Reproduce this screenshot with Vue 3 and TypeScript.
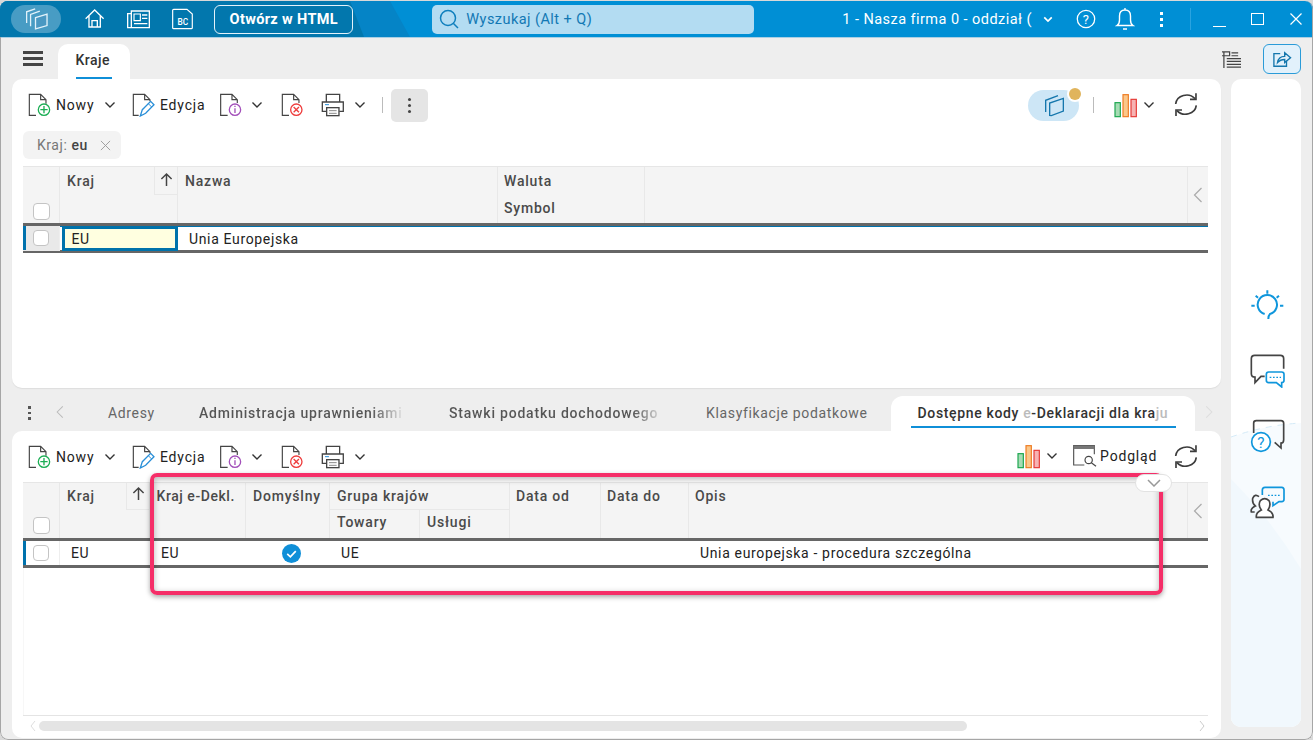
<script setup lang="ts">
const tabs2: string[] = ['Adresy', 'Administracja uprawnieniami', 'Stawki podatku dochodowego', 'Klasyfikacje podatkowe']
</script>

<template>
  <div class="window">
    <svg class="defs" aria-hidden="true">
      <symbol id="i-new" viewBox="84 278 70 72">
        <path d="M108 345H88V282H122L138 298V310M122 282V298H138" fill="none" stroke="#444" stroke-width="3.5" />
        <circle cx="132" cy="328" r="17" fill="#fff" stroke="#1cae55" stroke-width="4" />
        <path d="M132 317V339M121 328H143" stroke="#1cae55" stroke-width="4" />
      </symbol>
      <symbol id="i-edit" viewBox="396 278 70 72">
        <path d="M416 345H400V282H434L450 298V303M434 282V298H450M400 345H412" fill="none" stroke="#444" stroke-width="3.5" />
        <path d="M421 347L427 328L452 303L462 313L437 339Z" fill="#fff" stroke="#2a8fd8" stroke-width="4" />
        <path d="M445 310L455 320" stroke="#2a8fd8" stroke-width="3" />
      </symbol>
      <symbol id="i-info" viewBox="656 278 70 72">
        <path d="M682 345H661V282H695L711 298V308M695 282V298H711" fill="none" stroke="#444" stroke-width="3.5" />
        <circle cx="704" cy="328" r="17" fill="#fff" stroke="#a350ba" stroke-width="4" />
        <path d="M704 324V338M704 316V320" stroke="#a350ba" stroke-width="4" />
      </symbol>
      <symbol id="i-del" viewBox="844 278 70 72">
        <path d="M868 345H848V282H882L898 298V308M882 282V298H898" fill="none" stroke="#444" stroke-width="3.5" />
        <circle cx="890" cy="328" r="17" fill="#fff" stroke="#ee3d3d" stroke-width="4" />
        <path d="M882 320L898 336M898 320L882 336" stroke="#ee3d3d" stroke-width="4" />
      </symbol>
      <symbol id="i-print" viewBox="964 278 70 72">
        <path d="M980 305V282H1020V305M980 333H968V305H1031V333H1019" fill="none" stroke="#444" stroke-width="4" />
        <rect x="981" y="322" width="37" height="24" fill="#fff" stroke="#444" stroke-width="4" />
        <path d="M988 331H1011M988 339H1011" stroke="#888" stroke-width="3" />
        <path d="M976 313H988" stroke="#2a8fd8" stroke-width="3" />
      </symbol>
      <symbol id="i-chev" viewBox="0 0 12 8">
        <path d="M1.5 1.5L6 6L10.5 1.5" fill="none" stroke="#333" stroke-width="1.4" />
      </symbol>
      <symbol id="i-chart" viewBox="760 276 75 75">
        <rect x="766" y="305" width="16" height="42" fill="#a6dcb4" stroke="#1aa64e" stroke-width="3.500" />
        <rect x="790" y="281" width="16" height="66" fill="#fbc78a" stroke="#ee7b22" stroke-width="3.500" />
        <rect x="814" y="295" width="16" height="52" fill="#f6b3b3" stroke="#e53935" stroke-width="3.500" />
      </symbol>
      <symbol id="i-refresh" viewBox="940 276 76 76">
        <path d="M948 312A33 30 0 0 1 1006 296M1010 316A33 30 0 0 1 952 332" fill="none" stroke="#3c3c3c" stroke-width="5" />
        <path d="M1009 280V298H991M949 348V330H967" fill="none" stroke="#3c3c3c" stroke-width="5" />
      </symbol>
      <symbol id="i-up" viewBox="0 0 14 16">
        <path d="M7 15V2M1.500 7.500L7 2L12.500 7.500" fill="none" stroke="#444" stroke-width="1.600" />
      </symbol>
    </svg>

    <header class="topbar">
      <span class="topbar-dark"></span>
      <span class="topbar-band"></span>
      <span class="logo-pill">
        <svg class="ic-logo" viewBox="70 22 76 72">
          <path d="M78 70V36L104 27M90 80V44L118 34" fill="none" stroke="#e2f2fa" stroke-width="4" />
          <path d="M105 54L140 43V78L105 88Z" fill="#4a98c2" stroke="#e2f2fa" stroke-width="4" />
        </svg>
      </span>
      <svg class="ic-home" viewBox="250 28 70 64">
        <path d="M258 60L285 34L312 60M268 52V85H302V52M277 85V66H293V85" fill="none" stroke="#fff" stroke-width="4" />
      </svg>
      <svg class="ic-news" viewBox="382 30 74 62">
        <path d="M398 36H452V86H398ZM398 44H387V86H398" fill="none" stroke="#fff" stroke-width="4" />
        <path d="M406 45H425V65H406Z" fill="none" stroke="#fff" stroke-width="3.5" />
        <path d="M430 48H446M430 58H446M406 74H446" stroke="#fff" stroke-width="4" />
      </svg>
      <svg class="ic-bc" viewBox="522 26 70 66">
        <path d="M527 33Q527 30 530 30H570L586 44V85Q586 88 583 88H530Q527 88 527 85Z" fill="none" stroke="#fff" stroke-width="3.5" />
        <text x="558" y="77" text-anchor="middle" fill="#fff" font-family="Roboto, sans-serif" font-size="25" font-weight="500">BC</text>
      </svg>
      <button class="html-btn">Otwórz w HTML</button>
      <div class="search">
        <svg class="ic-search" viewBox="0 0 20 20">
          <circle cx="9" cy="9" r="7.5" fill="none" stroke="#0f7fbd" stroke-width="1.5" />
          <path d="M14.5 14.5L19 19" stroke="#0f7fbd" stroke-width="1.5" />
        </svg>
        <span>Wyszukaj (Alt + Q)</span>
      </div>
      <span class="company">1 - Nasza firma 0 - oddział (</span>
      <svg class="ic-co" viewBox="0 0 12 8"><path d="M1.5 1.5L6 6L10.5 1.5" fill="none" stroke="#fff" stroke-width="2" /></svg>
      <svg class="ic-help" viewBox="0 0 20 20">
        <circle cx="10" cy="10" r="8.7" fill="none" stroke="#fff" stroke-width="1.3" />
        <text x="10" y="14.5" text-anchor="middle" fill="#fff" font-family="Roboto, sans-serif" font-size="13">?</text>
      </svg>
      <svg class="ic-bell" viewBox="0 0 20 24">
        <path d="M2 18.5Q4.5 17 4.5 13V9Q4.5 3 10 3T15.500 9V13Q15.500 17 18 18.500ZM10 1V3M8 22H12" fill="none" stroke="#fff" stroke-width="1.400" />
      </svg>
      <span class="dots-top"><i></i><i></i><i></i></span>
      <span class="top-sep"></span>
      <span class="win-min"></span>
      <span class="win-max"></span>
      <svg class="win-close" viewBox="0 0 12 12"><path d="M.5 .5L11.500 11.500M11.500 .5L.5 11.500" stroke="#fff" stroke-width="1.200" /></svg>
    </header>

    <nav class="main-tabs">
      <span class="burger"><i></i><i></i><i></i></span>
      <div class="main-tab"><span>Kraje</span></div>
      <svg class="ic-list" viewBox="0 0 22 20">
        <path d="M1 1H3V18M1 1H9V5H1M11 2H18M11 5H18M6 8H21M6 11H21M6 14H21M6 17H21" fill="none" stroke="#444" stroke-width="1.300" />
      </svg>
      <button class="share-btn">
        <svg viewBox="0 0 22 20">
          <path d="M9 4H2V18H16V12" fill="none" stroke="#1577ad" stroke-width="1.500" />
          <path d="M6 14Q7 7 14 7V3L20.500 8.500L14 14V10.500Q9 10.500 6 14Z" fill="none" stroke="#1577ad" stroke-width="1.500" />
        </svg>
      </button>
    </nav>

    <div class="workspace">
      <div class="left">
        <section class="card card-top">
          <div class="toolbar">
            <svg class="ic-doc"><use href="#i-new" /></svg>
            <span class="lbl lbl-new">Nowy</span>
            <svg class="ic-chev"><use href="#i-chev" /></svg>
            <svg class="ic-doc m-edit"><use href="#i-edit" /></svg>
            <span class="lbl lbl-edit">Edycja</span>
            <svg class="ic-doc m-info"><use href="#i-info" /></svg>
            <svg class="ic-chev m-chev"><use href="#i-chev" /></svg>
            <svg class="ic-doc m-del"><use href="#i-del" /></svg>
            <svg class="ic-doc m-print"><use href="#i-print" /></svg>
            <svg class="ic-chev m-chev"><use href="#i-chev" /></svg>
            <span class="tb-sep m-sep"></span>
            <button class="more"><i></i><i></i><i></i></button>
            <div class="tb-right">
              <span class="pill">
                <svg viewBox="545 278 65 72">
                  <path d="M553 335V300L590 286M565 345V308L606 294V332L570 346Z" fill="none" stroke="#1577ad" stroke-width="4" />
                </svg>
                <i class="pill-dot"></i>
              </span>
              <span class="tb-sep m-sep2"></span>
              <svg class="ic-chart m-chart"><use href="#i-chart" /></svg>
              <svg class="ic-chev m-chev2"><use href="#i-chev" /></svg>
              <svg class="ic-ref m-ref"><use href="#i-refresh" /></svg>
            </div>
          </div>
          <div class="chip-row">
            <span class="chip">Kraj: <b>eu</b>
              <svg viewBox="0 0 12 12"><path d="M1 1L11 11M11 1L1 11" stroke="#999" stroke-width="1" /></svg>
            </span>
          </div>
          <div class="grid">
            <div class="head cols-a">
              <div class="hc hc-check"><span class="box"></span></div>
              <div class="hc hc-kraj"><span>Kraj</span><span class="sort"><svg><use href="#i-up" /></svg></span></div>
              <div class="hc hc-t hc-p7">Nazwa</div>
              <div class="hc hc-two"><span>Waluta</span><span>Symbol</span></div>
              <div class="hc"></div>
              <div class="hc hc-side"><svg viewBox="0 0 10 16"><path d="M8.500 1L1.500 8L8.500 15" fill="none" stroke="#aaa" stroke-width="1.200" /></svg></div>
            </div>
            <div class="row row-first cols-a">
              <div class="td td-check sel"><span class="box"></span></div>
              <div class="td td-focus">EU</div>
              <div class="td">Unia Europejska</div>
            </div>
          </div>
        </section>

        <nav class="sub-tabs">
          <span class="dots-sub"><i></i><i></i><i></i></span>
          <svg class="sub-prev" viewBox="0 0 10 16"><path d="M8.500 1L1.500 8L8.500 15" fill="none" stroke="#bbb" stroke-width="1.300" /></svg>
          <span v-for="(t, i) in tabs2" :key="t" class="sub-tab" :class="'st' + i">{{ t }}</span>
          <div class="sub-active">
            <span>Dostępne kody <em>e</em>-Deklaracji dla kra<em class="fade">ju</em></span>
          </div>
          <svg class="sub-next" viewBox="0 0 10 16"><path d="M1.500 1L8.500 8L1.500 15" fill="none" stroke="#ddd" stroke-width="1.300" /></svg>
        </nav>

        <section class="card card-bottom">
          <div class="toolbar toolbar-b">
            <svg class="ic-doc"><use href="#i-new" /></svg>
            <span class="lbl lbl-new">Nowy</span>
            <svg class="ic-chev"><use href="#i-chev" /></svg>
            <svg class="ic-doc m-edit"><use href="#i-edit" /></svg>
            <span class="lbl lbl-edit">Edycja</span>
            <svg class="ic-doc m-info"><use href="#i-info" /></svg>
            <svg class="ic-chev m-chev"><use href="#i-chev" /></svg>
            <svg class="ic-doc m-del"><use href="#i-del" /></svg>
            <svg class="ic-doc m-print"><use href="#i-print" /></svg>
            <svg class="ic-chev m-chev"><use href="#i-chev" /></svg>
            <div class="tb-right">
              <svg class="ic-chart"><use href="#i-chart" /></svg>
              <svg class="ic-chev m-chev3"><use href="#i-chev" /></svg>
              <svg class="ic-prev" viewBox="578 180 72 66">
                <path d="M612 240H580V182H642V208" fill="none" stroke="#555" stroke-width="3.500" />
                <rect x="580" y="182" width="62" height="10" fill="#777" />
                <circle cx="625" cy="225" r="11" fill="#fff" stroke="#444" stroke-width="3.500" />
                <path d="M633 233L647 244" stroke="#444" stroke-width="3.500" />
              </svg>
              <span class="lbl lbl-prev">Podgląd</span>
              <svg class="ic-ref m-ref3"><use href="#i-refresh" /></svg>
            </div>
          </div>
          <div class="grid grid-b">
            <span class="fold"><svg viewBox="0 0 14 8"><path d="M1 1L7 7L13 1" fill="none" stroke="#999" stroke-width="1.500" /></svg></span>
            <div class="head head-b cols-b">
              <div class="hc hc-check"><span class="box"></span></div>
              <div class="hc hc-kraj"><span>Kraj</span><span class="sort sort-b"><svg><use href="#i-up" /></svg></span></div>
              <div class="hc hc-t hc-p7 hc-tight">Kraj e-Dekl.</div>
              <div class="hc hc-t hc-p7">Domyślny</div>
              <div class="hc hc-group">
                <div class="group-title">Grupa krajów</div>
                <div class="group-subs"><span>Towary</span><span>Usługi</span></div>
              </div>
              <div class="hc hc-t">Data od</div>
              <div class="hc hc-t">Data do</div>
              <div class="hc hc-t">Opis</div>
              <div class="hc hc-side"><svg viewBox="0 0 10 16"><path d="M8.500 1L1.500 8L8.500 15" fill="none" stroke="#aaa" stroke-width="1.200" /></svg></div>
            </div>
            <div class="row cols-b">
              <div class="td td-check"><span class="box"></span></div>
              <div class="td">EU</div>
              <div class="td">EU</div>
              <div class="td td-center">
                <svg class="ok" viewBox="0 0 20 20">
                  <circle cx="10" cy="10" r="10" fill="#0f8fd8" />
                  <path d="M5.500 10.500L8.800 13.500L14.500 7.500" fill="none" stroke="#fff" stroke-width="1.800" />
                </svg>
              </div>
              <div class="td">UE</div>
              <div class="td"></div>
              <div class="td"></div>
              <div class="td">Unia europejska - procedura szczególna</div>
            </div>
          </div>
          <div class="hscroll">
            <svg viewBox="0 0 6 12"><path d="M5 1L1 6L5 11" fill="none" stroke="#ddd" stroke-width="1" /></svg>
            <div class="track"><span class="thumb"></span></div>
            <svg viewBox="0 0 6 12"><path d="M1 1L5 6L1 11" fill="none" stroke="#ccc" stroke-width="1" /></svg>
          </div>
          <div class="annot"></div>
        </section>
      </div>

      <aside class="side">
        <svg class="side-bg" viewBox="0 0 70 648" preserveAspectRatio="none">
          <path d="M0 358Q35 346 70 344V648H0Z" fill="#f7fbfe" />
          <path d="M0 400Q40 440 70 490V648H0Z" fill="#f1f8fd" />
          <path d="M0 358Q35 346 70 344" fill="none" stroke="#d5ebf8" stroke-width="1" stroke-dasharray="6 6" />
        </svg>
        <svg class="side-ic side-first" viewBox="85 55 120 100">
          <path d="M135 133A29 29 0 1 1 151 133Q146 138 146 148M143 62V72M108 78L115 84M178 78L171 84M95 108H105M181 108H191" fill="none" stroke="#0f96dc" stroke-width="6" />
        </svg>
        <svg class="side-ic" viewBox="85 245 120 110">
          <path d="M135 318H124L106 337V320Q95 320 95 310V265Q95 255 105 255H182Q192 255 192 265V295" fill="none" stroke="#444" stroke-width="5" />
          <path d="M147 305H186Q193 305 193 312V330Q193 337 186 337V350L170 337H147Q140 337 140 330V312Q140 305 147 305Z" fill="#fff" stroke="#0f96dc" stroke-width="5" />
          <path d="M150 321H184" stroke="#0f96dc" stroke-width="4" stroke-dasharray="5 5" />
        </svg>
        <svg class="side-ic" viewBox="85 445 120 110">
          <path d="M102 490V460Q102 453 110 453H184Q192 453 192 461V510Q192 520 184 520V535L165 518" fill="none" stroke="#444" stroke-width="5" />
          <circle cx="124" cy="517" r="28" fill="#fff" stroke="#0f96dc" stroke-width="5" />
          <text x="124" y="534" text-anchor="middle" fill="#0f96dc" font-family="Roboto, sans-serif" font-size="46">?</text>
        </svg>
        <svg class="side-ic" viewBox="85 645 120 110">
          <path d="M128 675V660Q128 652 136 652H186Q193 652 193 660V688Q193 695 186 695H178L160 707V695" fill="none" stroke="#0f96dc" stroke-width="5" />
          <path d="M145 676H180" stroke="#0f96dc" stroke-width="4" stroke-dasharray="5 5" />
          <path d="M118 680Q106 670 99 685Q97 700 107 708Q92 715 95 726H105" fill="none" stroke="#444" stroke-width="5" />
          <path d="M110 742Q108 728 125 720Q114 705 122 692Q135 680 148 692Q155 705 145 720Q162 728 160 742Z" fill="#fff" stroke="#444" stroke-width="5" />
        </svg>
      </aside>
    </div>
  </div>
</template>

<style>
html, body { margin: 0; background: #d9d9d9; }
</style>

<style scoped>
.window {
  position: relative; width: 1313px; height: 739px; margin-top: 1px; overflow: hidden;
  display: flex; flex-direction: column; background: #eeeeee; border-radius: 8px 8px 8px 8px;
  font-family: Roboto, "Noto Sans", sans-serif; font-size: 14px; color: #222; letter-spacing: .45px;
}
.window::after {
  content: ""; position: absolute; inset: 0; border: 1px solid #a6a6a6; border-top: 0; border-radius: 8px;
  pointer-events: none;
}
.defs { position: absolute; width: 0; height: 0; }
i, em { font-style: normal; }
button { font: inherit; letter-spacing: inherit; padding: 0; cursor: default; }

/* top bar */
.topbar {
  position: relative; flex: 0 0 37px; display: flex; align-items: center; background: #008fd5;
  border-bottom: 1px solid #a9cfe4; box-sizing: border-box; height: 37px; overflow: hidden;
}
.topbar-dark, .topbar-band { position: absolute; left: 0; top: 0; bottom: 0; }
.topbar-dark { width: 364px; background: #0277ad; clip-path: polygon(0 0, 350px 0, 364px 100%, 0 100%); z-index: 1; }
.topbar-band { width: 410px; background: #0584c6; clip-path: polygon(0 0, 390px 0, 410px 100%, 0 100%); }
.topbar > *:not(.topbar-dark):not(.topbar-band) { position: relative; z-index: 2; flex: none; }
.logo-pill { margin-left: 11px; width: 50px; height: 28px; border-radius: 14px; background: rgba(255,255,255,.28); display: flex; align-items: center; justify-content: center; }
.ic-logo { width: 25px; height: 24px; }
.ic-home { margin-left: 22px; width: 23.300px; height: 21.300px; }
.ic-news { margin-left: 20px; width: 24.700px; height: 20.700px; }
.ic-bc { margin-left: 20px; width: 23.300px; height: 22px; }
.html-btn {
  margin-left: 20px; width: 139px; height: 29px; box-sizing: border-box; border: 1px solid #e4f2fa; border-radius: 6px;
  background: transparent; color: #fff; font-weight: 700; font-size: 14.500px; letter-spacing: .35px;
}
.search {
  margin-left: 79px; width: 322px; height: 29px; background: #b3dcf2; border-radius: 5px; display: flex; align-items: center;
  color: #1278b4; font-size: 14.500px;
}
.ic-search { margin-left: 7px; width: 20px; height: 20px; margin-right: 7px; }
.company { margin-left: 88px; width: 190px; color: #fff; white-space: nowrap; overflow: hidden; font-size: 14.500px; }
.ic-co { margin-left: 11px; width: 10px; height: 7px; }
.ic-help { margin-left: 23px; width: 20px; height: 20px; }
.ic-bell { margin-left: 19px; width: 20px; height: 24px; }
.dots-top { margin-left: 25px; display: flex; flex-direction: column; gap: 3px; }
.dots-top i { width: 3px; height: 3px; background: #fff; display: block; }
.top-sep { margin-left: 27px; width: 1px; height: 22px; background: #2aa3e0; }
.win-min { margin-left: 22px; width: 13px; height: 1px; background: #fff; margin-top: 14px; }
.win-max { margin-left: 25px; width: 11px; height: 10px; border: 1px solid #fff; }
.win-close { margin-left: 26px; width: 12px; height: 12px; }

/* main tabs */
.main-tabs { flex: 0 0 41px; display: flex; align-items: flex-end; }
.burger { margin-left: 23px; align-self: center; display: flex; flex-direction: column; gap: 3px; width: 20px; }
.burger i { height: 3px; background: #444; display: block; }
.main-tab { margin-left: 15px; width: 72px; height: 35px; background: #fff; border-radius: 10px 10px 0 0; box-sizing: border-box; padding-top: 8px; display: flex; justify-content: center; font-weight: 500; }
.main-tab span { height: 25px; border-bottom: 2px solid #0f8fd8; line-height: 17px; width: 36px; display: block; white-space: nowrap; letter-spacing: .45px; color: #333; margin-right: 1px; }
.ic-list { margin-left: auto; align-self: center; width: 21px; height: 19px; margin-top: 4px; }
.share-btn { margin: 0 12px 5px 21px; width: 38px; height: 30px; box-sizing: border-box; border: 1px solid #2a9bd8; border-radius: 6px; background: #e2f1fb; display: flex; align-items: center; justify-content: center; }
.share-btn svg { width: 20px; height: 18px; }

/* workspace */
.workspace { flex: 1; display: flex; padding-left: 12px; gap: 10px; min-height: 0; }
.left { width: 1209px; display: flex; flex-direction: column; padding-bottom: 2px; box-sizing: border-box; }
.card { background: #fff; border-radius: 10px; padding-left: 11px; padding-right: 13px; box-sizing: border-box; }
.card-top { height: 309px; flex: none; box-shadow: 0 1px 1px #ddd; }
.card-bottom { position: relative; flex: 1; display: flex; flex-direction: column; min-height: 0; }

.toolbar { height: 52px; display: flex; align-items: center; padding-left: 5px; margin-right: 9.300px; }
.toolbar-b { height: 51px; flex: none; }
.ic-doc { width: 23.300px; height: 24px; flex: none; }
.ic-chev { width: 12px; height: 8px; flex: none; }
.lbl { margin-left: 4.700px; flex: none; white-space: nowrap; letter-spacing: .8px; }
.lbl-new { width: 48px; }
.lbl-edit { width: 44px; }
.m-edit { margin-left: 16px; }
.m-info { margin-left: 14.700px; }
.m-chev { margin-left: 9.500px; }
.m-del { margin-left: 17.800px; }
.m-print { margin-left: 16.700px; }
.tb-sep { width: 1px; height: 16px; background: #bbb; flex: none; }
.m-sep { margin-left: 16px; }
.more { margin-left: 8px; width: 37px; height: 33px; border: 0; border-radius: 5px; background: #e5e5e5; display: flex; flex-direction: column; align-items: center; justify-content: center; gap: 3px; }
.more i { width: 3px; height: 3px; border-radius: 50%; background: #444; display: block; }
.tb-right { margin-left: auto; display: flex; align-items: center; }
.pill { position: relative; width: 51px; height: 31px; border-radius: 16px; background: #cde6f6; display: flex; align-items: center; justify-content: center; flex: none; }
.pill svg { width: 21.700px; height: 24px; }
.pill-dot { position: absolute; right: -2px; top: -2px; width: 12px; height: 12px; border-radius: 50%; background: #e0b45c; box-shadow: 0 0 0 2px #fff; }
.m-sep2 { margin-left: 14px; }
.ic-chart { width: 25px; height: 25px; flex: none; }
.m-chart { margin-left: 19px; }
.m-chev2 { margin-left: 5px; }
.ic-ref { width: 25.300px; height: 25.300px; flex: none; }
.m-ref { margin-left: 18px; }
.m-chev3 { margin-left: 5px; }
.ic-prev { margin-left: 15px; width: 24px; height: 22px; flex: none; }
.lbl-prev { margin-left: 3px; width: 56px; }
.m-ref3 { margin-left: 17.300px; }

.chip-row { height: 35px; }
.chip { display: inline-flex; align-items: center; height: 28px; width: 98px; box-sizing: border-box; padding-left: 14px; background: #f3f3f3; border-radius: 6px; color: #777; white-space: pre; letter-spacing: .55px; }
.chip b { font-weight: 500; color: #444; }
.chip svg { width: 11px; height: 11px; margin-left: 12px; }

/* grids */
.grid { position: relative; border-top: 1px solid #e6e6e6; }
.grid-b { flex: 1; min-height: 0; border-bottom: 1px solid #e4e4e4; box-shadow: inset 1px 0 0 #f7f7f7; }
.cols-a { display: grid; grid-template-columns: 37px 118px 320px 147px 1fr 20px; }
.cols-b { display: grid; grid-template-columns: 37px 90px 96px 84px 180px 91px 88px 499px 20px; }
.head { height: 56px; background: #f4f4f4; font-weight: 500; color: #4a4a4a; letter-spacing: .8px; }
.head-b { height: 55px; }
.hc { box-sizing: border-box; border-right: 1px solid #e8e8e8; min-width: 0; }
.hc-t { padding: 5px 6px; line-height: 18px; white-space: nowrap; }
.hc-p7 { padding-left: 7px; }
.hc-tight { letter-spacing: .55px; padding-left: 6.500px; }
.head-b .hc-t { padding-top: 4px; }
.hc-check { display: flex; align-items: flex-end; padding: 0 0 3px 10px; }
.head-b .hc-check { padding-bottom: 4px; }
.hc-kraj { display: flex; justify-content: space-between; align-items: flex-start; padding-left: 7px; line-height: 18px; }
.hc-kraj > span:first-child { padding-top: 5px; }
.head-b .hc-kraj > span:first-child { padding-top: 4px; }
.sort { width: 23px; height: 28px; box-sizing: border-box; border-left: 1px solid #e8e8e8; border-bottom: 1px solid #e8e8e8; display: flex; justify-content: center; padding-top: 5px; }
.sort svg { width: 13px; height: 15px; }
.sort-b { height: 27px; padding-top: 3px; }
.hc-two { display: flex; flex-direction: column; padding: 5px 6px; gap: 9px; line-height: 18px; }
.hc-side { display: flex; align-items: center; justify-content: center; border-right: 0; }
.hc-side svg { width: 10px; height: 16px; }
.hc-group { display: flex; flex-direction: column; }
.group-title { height: 27px; box-sizing: border-box; padding: 4px 7px; line-height: 18px; border-bottom: 1px solid #e8e8e8; }
.group-subs { flex: 1; display: grid; grid-template-columns: 90px 1fr; }
.group-subs span { padding: 3px 7px; line-height: 18px; }
.group-subs span:first-child { border-right: 1px solid #e8e8e8; }

.box { display: block; width: 17px; height: 17px; box-sizing: border-box; border: 1.500px solid #c4c4c4; border-radius: 4px; background: #fff; }
.row { height: 30px; box-sizing: border-box; border-top: 3px solid #666; border-bottom: 3px solid #666; position: relative; }
.row::before { content: ""; position: absolute; left: 0; top: 0; bottom: 0; width: 3px; background: #0072ad; }
.row-first { box-shadow: inset 0 1px 0 #0072ad; }
.td { box-sizing: border-box; padding-left: 11px; line-height: 24px; min-width: 0; white-space: nowrap; letter-spacing: .65px; }
.row-first .td { padding-top: 1px; }
.td-check { padding: 0 0 0 10px; display: flex; align-items: center; border-right: 1px solid #eee; }
.row-first .td-check { padding: 0 0 2px 10px; }
.td-check.sel { background: #e9e9e9; }
.td-check .box { width: 16px; height: 16px; }
.row-first .td-focus { position: relative; z-index: 1; border: 3px solid #0073ab; background: #ffffe0; line-height: 21px; padding: 0 0 0 7px; margin-left: 1.500px; height: 25px; }
.td-center { display: flex; align-items: center; justify-content: center; padding: 0 0 0 6px; }
.ok { width: 19px; height: 19px; }
.fold { position: absolute; z-index: 1; left: 1112px; top: -9px; width: 37px; height: 18px; box-sizing: border-box; background: #fff; border: 1px solid #e2e2e2; border-radius: 9px; display: flex; align-items: center; justify-content: center; }
.fold svg { width: 14px; height: 8px; }

.hscroll { flex: 0 0 22px; display: flex; align-items: flex-start; padding-top: 5px; box-sizing: border-box; }
.hscroll svg { width: 6px; height: 12px; flex: none; margin-top: -1px; }
.hscroll svg:first-child { margin-left: 7px; }
.track { width: 1158px; margin: 0 2px 0 3px; }
.thumb { display: block; height: 10px; width: 928px; border-radius: 5px; background: #e4e4e4; }

.annot {
  position: absolute; left: 138px; top: 42px; width: 1013px; height: 122px; box-sizing: border-box;
  border: 4px solid #f52e68; border-radius: 7px; pointer-events: none;
  box-shadow: 0 2px 5px rgba(0,0,0,.35), inset 0 2px 6px rgba(0,0,0,.3);
}

/* sub tabs */
.sub-tabs { flex: 0 0 43px; display: flex; align-items: flex-end; position: relative; }
.dots-sub { position: absolute; left: 16px; top: 18px; display: flex; flex-direction: column; gap: 3px; }
.dots-sub i { width: 2.500px; height: 2.500px; background: #555; display: block; }
.sub-prev { position: absolute; left: 44px; top: 17px; width: 8px; height: 14px; }
.sub-next { position: absolute; right: 8px; top: 17px; width: 8px; height: 14px; }
.sub-tab { position: absolute; top: 16px; line-height: 18px; white-space: nowrap; color: #666; letter-spacing: .65px; }
.st0 { left: 96px; }
.st1 { left: 187px; width: 203px; overflow: hidden; font-weight: 500; letter-spacing: .8px; background: linear-gradient(90deg, #555 85%, #ddd 100%); -webkit-background-clip: text; background-clip: text; -webkit-text-fill-color: transparent; }
.st2 { left: 437px; width: 209px; overflow: hidden; font-weight: 500; letter-spacing: .8px; background: linear-gradient(90deg, #555 88%, #ccc 100%); -webkit-background-clip: text; background-clip: text; -webkit-text-fill-color: transparent; }
.st3 { left: 694px; }
.sub-active { position: absolute; left: 879px; top: 8px; width: 304px; height: 35px; background: #fff; border-radius: 12px 12px 0 0; display: flex; justify-content: center; }
.sub-active span { display: block; width: 265px; height: 32px; box-sizing: border-box; border-bottom: 2px solid #0f8fd8; padding: 8px 0 0 7px; line-height: 18px; font-weight: 500; white-space: nowrap; overflow: hidden; color: #333; letter-spacing: .65px; }
.sub-active em { color: #bbb; }
.sub-active em.fade { color: #bbb; }

/* sidebar */
.side { position: relative; width: 70px; height: 648px; background: #fff; border-radius: 10px; display: flex; flex-direction: column; align-items: center; overflow: hidden; }
.side-bg { position: absolute; inset: 0; width: 100%; height: 100%; }
.side-ic { position: relative; width: 40px; height: 36.700px; margin-top: 30px; margin-left: 4.600px; flex: none; }
.side-first { height: 33.300px; margin-top: 209.300px; }
</style>
